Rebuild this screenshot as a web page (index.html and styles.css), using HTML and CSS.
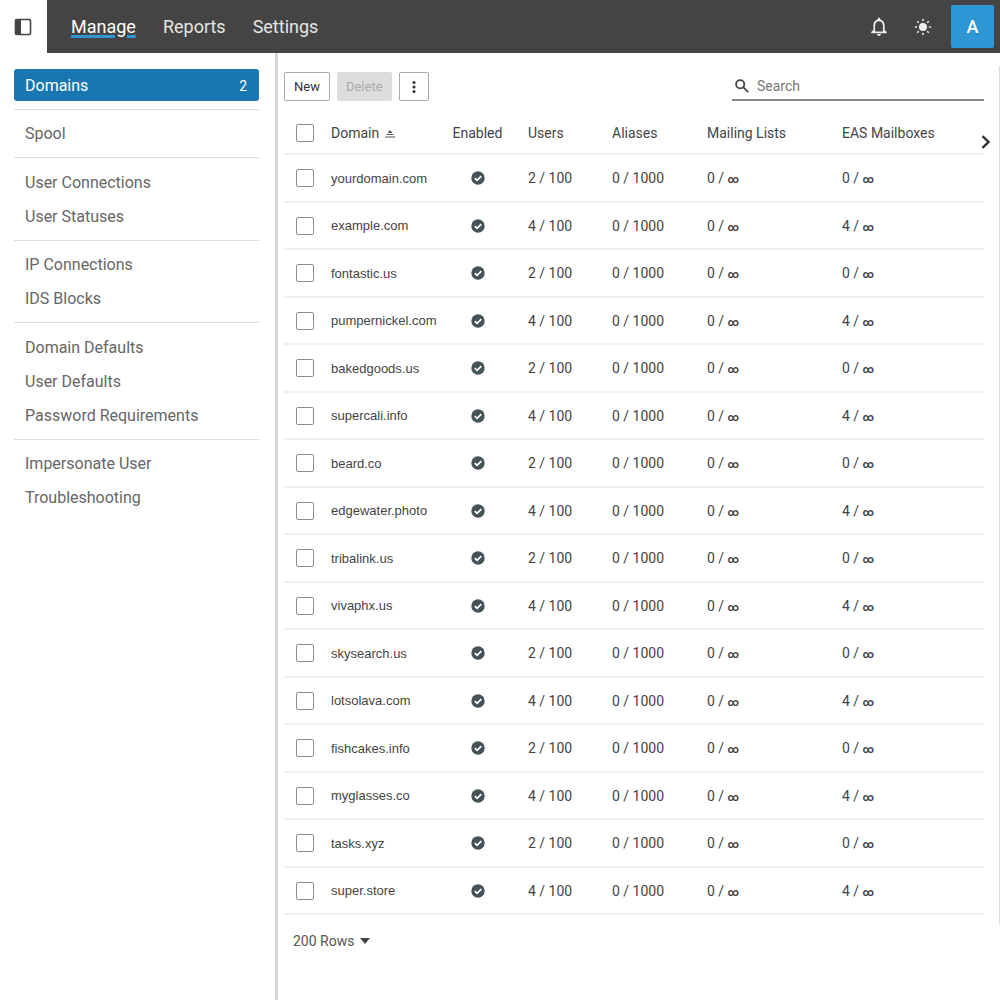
FILE: index.html
```html
<!DOCTYPE html>
<html lang="en">
<head>
  <meta charset="UTF-8" />
  <meta name="viewport" content="width=device-width, initial-scale=1.0"/>
  <title>Manage - Domains</title>
  <link rel="stylesheet" href="styles.css">
</head>
<body>

  <header class="topbar">
    <button class="toggle-button" aria-label="Toggle sidebar">
      <svg width="18" height="18" viewBox="0 0 18 18">
        <rect x="1.5" y="1.5" width="15" height="15" rx="1.2" fill="#fff" stroke="#444" stroke-width="1.6"/>
        <path d="M2 2h5v14H2z" fill="#444"/>
      </svg>
    </button>
    <nav class="main-nav">
      <a href="#" class="active">Manage</a>
      <a href="#">Reports</a>
      <a href="#">Settings</a>
    </nav>
    <div class="topbar-actions">
      <button class="icon-button" aria-label="Notifications">
        <svg width="24" height="24" viewBox="0 0 24 24" fill="#eee">
          <path d="M12 2.800c.8 0 1.300.5 1.300 1.200v.6c2.600.6 4.300 2.800 4.300 5.600v4.900l2.200 2v1.100H4.200v-1.100l2.200-2v-4.900c0-2.800 1.700-5 4.300-5.600V4c0-.7.5-1.200 1.300-1.200zM12 6.200c-2.400 0-3.900 1.900-3.900 4.200v6.100h7.800v-6.100c0-2.300-1.500-4.200-3.900-4.200zM10 19h4c0 1-.9 1.900-2 1.900s-2-.9-2-1.900z"/>
        </svg>
      </button>
      <button class="icon-button" aria-label="Theme">
        <svg width="20" height="20" viewBox="0 0 20 20" fill="#eee" stroke="#eee" stroke-width="1.6" stroke-linecap="round">
          <circle cx="10" cy="10" r="3.2"/>
          <path d="M10 2.500v1M10 16.500v1M2.500 10h1M16.500 10h1M4.700 4.700l.6.6M14.700 14.700l.6.6M4.700 15.300l.6-.6M14.700 5.300l.6-.6"/>
        </svg>
      </button>
      <button class="avatar">A</button>
    </div>
  </header>

  <div class="layout">
    <aside class="sidebar">
      <ul class="menu-group">
        <li><a href="#" class="active">Domains <span>2</span></a></li>
      </ul>
      <ul class="menu-group">
        <li><a href="#">Spool</a></li>
      </ul>
      <ul class="menu-group">
        <li><a href="#">User Connections</a></li>
        <li><a href="#">User Statuses</a></li>
      </ul>
      <ul class="menu-group">
        <li><a href="#">IP Connections</a></li>
        <li><a href="#">IDS Blocks</a></li>
      </ul>
      <ul class="menu-group">
        <li><a href="#">Domain Defaults</a></li>
        <li><a href="#">User Defaults</a></li>
        <li><a href="#">Password Requirements</a></li>
      </ul>
      <ul class="menu-group">
        <li><a href="#">Impersonate User</a></li>
        <li><a href="#">Troubleshooting</a></li>
      </ul>
    </aside>

    <main class="content">
      <section class="panel">
        <div class="toolbar">
          <button class="btn">New</button>
          <button class="btn" disabled>Delete</button>
          <button class="btn btn-more" aria-label="More">
            <svg width="4" height="14" viewBox="0 0 4 14" fill="#333">
              <circle cx="2" cy="2.500" r="1.500"/><circle cx="2" cy="7" r="1.500"/><circle cx="2" cy="11.500" r="1.500"/>
            </svg>
          </button>
          <label class="search">
            <svg width="14" height="14" viewBox="0 0 14 14" fill="none" stroke="#444" stroke-width="1.8">
              <circle cx="5.200" cy="5.200" r="4.100"/>
              <path d="M8.200 8.200l5 5"/>
            </svg>
            <input type="search" placeholder="Search" aria-label="Search">
          </label>
        </div>

        <table class="domains">
          <thead>
            <tr>
              <th class="col-check"><input type="checkbox" aria-label="Select all"></th>
              <th class="col-domain">Domain
                <svg width="10" height="8" viewBox="0 0 10 8" fill="#555">
                  <path d="M5 0l2.500 3h-5zM1.500 4h7v1h-7zM0 6.500h10v1H0z"/>
                </svg>
              </th>
              <th class="col-enabled">Enabled</th>
              <th class="col-users">Users</th>
              <th class="col-aliases">Aliases</th>
              <th class="col-lists">Mailing Lists</th>
              <th>EAS Mailboxes</th>
            </tr>
          </thead>
          <tbody id="domainRows"></tbody>
        </table>

        <button class="scroll-right" aria-label="Next columns">
          <svg width="10" height="14" viewBox="0 0 10 14" fill="none" stroke="#333" stroke-width="2.400">
            <path d="M1.500 1.200L7.500 7l-6 5.800"/>
          </svg>
        </button>
      </section>

      <button class="row-count">200 Rows
        <svg width="10" height="6" viewBox="0 0 10 6" fill="#444"><path d="M0 0h10L5 6z"/></svg>
      </button>
    </main>
  </div>

  <script>
    const domains = [
      'yourdomain.com', 'example.com', 'fontastic.us', 'pumpernickel.com',
      'bakedgoods.us', 'supercali.info', 'beard.co', 'edgewater.photo',
      'tribalink.us', 'vivaphx.us', 'skysearch.us', 'lotsolava.com',
      'fishcakes.info', 'myglasses.co', 'tasks.xyz', 'super.store'
    ];

    const check = `
      <svg class="check" width="14" height="14" viewBox="0 0 14 14" role="img" aria-label="Enabled">
        <circle cx="7" cy="7" r="6.700" fill="#455357"/>
        <path d="M3.800 7.200l2.300 2.200 4.200-4.300" fill="none" stroke="#fff" stroke-width="1.700"/>
      </svg>`;

    const unlimited = '<span class="unlimited">∞</span>';

    document.getElementById('domainRows').innerHTML = domains.map((name, i) => {
      const users = i % 2 ? 4 : 2;
      const eas = i % 2 ? 4 : 0;
      return `
        <tr>
          <td class="col-check"><input type="checkbox" aria-label="${name}"></td>
          <td class="domain-name">${name}</td>
          <td class="col-enabled">${check}</td>
          <td class="col-users">${users} / 100</td>
          <td>0 / 1000</td>
          <td>0 / ${unlimited}</td>
          <td>${eas} / ${unlimited}</td>
        </tr>`;
    }).join('');
  </script>
</body>
</html>
```

FILE: styles.css
```css
:root {
  --bar-color: #444;
  --active-color: #1876b0;
  --accent-color: #2e96d5;
  --text-color: #444;
}

* {
  box-sizing: border-box;
}

body {
  margin: 0;
  min-height: 100vh;
  display: flex;
  flex-direction: column;
  font-family: Roboto, "Liberation Sans", sans-serif;
  font-size: 14px;
  color: var(--text-color);
  background: #fff;
}

button {
  font-family: inherit;
  padding: 0;
  border: none;
  background: none;
  cursor: pointer;
}

a {
  text-decoration: none;
}

svg {
  display: block;
}

/* Top bar */
.topbar {
  display: flex;
  height: 53px;
  background: var(--bar-color);
}

.toggle-button {
  width: 47px;
  display: flex;
  align-items: center;
  padding-left: 14px;
  background: #fff;
}

.main-nav {
  display: flex;
  align-items: center;
  gap: 27px;
  padding-left: 24px;
}

.main-nav a {
  color: #e6e6e6;
  font-size: 18px;
}

.main-nav .active {
  color: #fff;
  text-decoration: underline;
  text-decoration-color: var(--accent-color);
  text-decoration-thickness: 3px;
  text-underline-offset: 2px;
}

.topbar-actions {
  display: flex;
  align-items: center;
  margin-left: auto;
  padding-right: 6px;
}

.icon-button {
  width: 44px;
  height: 44px;
  display: flex;
  justify-content: center;
  align-items: center;
}

.avatar {
  width: 43px;
  height: 43px;
  margin-left: 6px;
  border-radius: 2px;
  background: var(--accent-color);
  color: #fff;
  font-size: 18px;
  font-weight: 500;
}

/* Sidebar */
.layout {
  flex: 1;
  display: flex;
}

.sidebar {
  width: 278px;
  padding: 16px 16px 16px 14px;
  border-right: 3px solid #d6d6d6;
}

.menu-group {
  display: flex;
  flex-direction: column;
  gap: 2px;
  margin: 0;
  padding: 8px 0;
  list-style: none;
  border-top: 1px solid #dedede;
}

.menu-group:first-child {
  padding-top: 0;
  border-top: none;
}

.menu-group:nth-child(even) {
  padding-top: 7px;
}

.menu-group a {
  display: flex;
  justify-content: space-between;
  padding: 2px 12px 0 11px;
  border-radius: 3px;
  color: #666;
  font-size: 16px;
  line-height: 30px;
}

.menu-group .active {
  background: var(--active-color);
  color: #fff;
}

.menu-group span {
  font-size: 14px;
}

/* Content */
.content {
  flex: 1;
  min-width: 0;
  padding-top: 13px;
}

.panel {
  position: relative;
  padding: 6px 15px 10px 6px;
  border-right: 1px solid #ddd;
}

.toolbar {
  display: flex;
  align-items: center;
  gap: 7px;
}

.btn {
  height: 29px;
  padding: 0 9px;
  border: 1px solid #aaa;
  border-radius: 2px;
  color: #333;
  font-size: 13px;
}

.btn:disabled {
  padding: 0 8px;
  border-color: #ddd;
  background: #ddd;
  color: #aaa;
  cursor: default;
}

.btn-more {
  padding: 0 12px;
}

.search {
  display: flex;
  align-items: center;
  gap: 8px;
  width: 252px;
  height: 29px;
  margin-left: auto;
  padding-left: 3px;
  border-bottom: 2px solid #888;
}

.search input {
  flex: 1;
  min-width: 0;
  padding: 0;
  border: none;
  outline: none;
  background: none;
  font-family: inherit;
  font-size: 14px;
}

.search input::placeholder {
  color: #777;
}

.domains {
  width: 100%;
  margin-top: 12px;
  table-layout: fixed;
  border-collapse: separate;
  border-spacing: 0;
}

.domains th,
.domains td {
  height: 48px;
  padding: 0;
  border-bottom: 2px solid #f0f0f0;
  text-align: left;
  font-weight: 400;
  white-space: nowrap;
}

.domains th {
  height: 42px;
}

.domains tr:nth-child(even) td {
  height: 47px;
}

.domains th svg {
  display: inline-block;
  margin-left: 2px;
}

.domains input {
  display: block;
  appearance: none;
  width: 18px;
  height: 18px;
  margin: 0 0 0 12px;
  border: 1px solid #8c8c8c;
  border-radius: 2px;
  background: #fff;
}

.domains input:checked {
  background: var(--active-color);
}

.domains .domain-name {
  font-family: "Liberation Sans", Arial, sans-serif;
  font-size: 13px;
}

.domains .col-enabled {
  text-align: center;
}

.domains .col-users {
  padding-left: 24px;
}

.check {
  margin: 0 auto;
}

.unlimited {
  font-size: 11px;
  font-weight: 700;
}

.col-check { width: 47px; }
.col-domain { width: 120px; }
.col-enabled { width: 53px; }
.col-users { width: 108px; }
.col-aliases { width: 95px; }
.col-lists { width: 135px; }

.scroll-right {
  position: absolute;
  top: 69px;
  right: 8px;
}

.row-count {
  display: flex;
  align-items: center;
  gap: 6px;
  margin: 8px 0 16px 15px;
  color: #555;
  font-size: 14px;
}
```
